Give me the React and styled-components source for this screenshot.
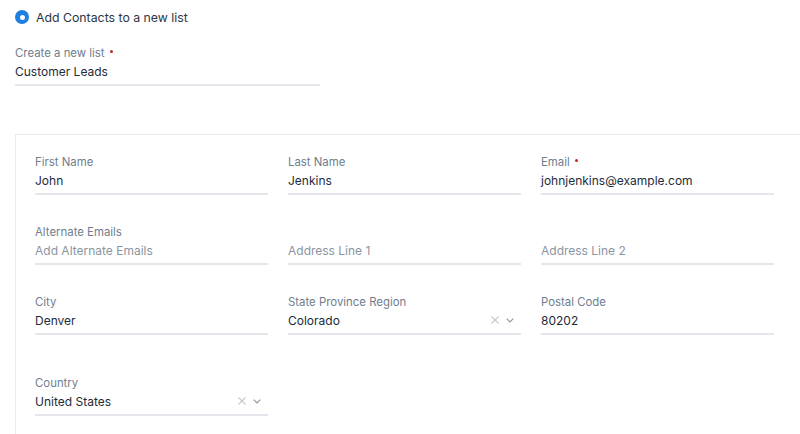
import React from "react";
import styled, { createGlobalStyle } from "styled-components";

const GlobalStyle = createGlobalStyle`
  html, body {
    margin: 0;
    padding: 0;
    background: #ffffff;
    font-family: Inter, "Noto Sans", sans-serif;
    overflow: hidden;
  }
`;

const Page = styled.div`
  padding: 9px 0 0 15px;
  width: 800px;
  height: 434px;
  box-sizing: border-box;
  overflow: hidden;
`;

const RadioRow = styled.label`
  display: flex;
  align-items: center;
  gap: 7px;
  height: 16px;
  font-size: 12.3px;
  color: #2b3646;
`;

const RadioDot = styled.span`
  width: 14px;
  height: 14px;
  border-radius: 50%;
  background: #1b7fe3;
  display: flex;
  align-items: center;
  justify-content: center;
  &::after {
    content: "";
    width: 5px;
    height: 5px;
    border-radius: 50%;
    background: #ffffff;
  }
`;

const ListField = styled.div`
  width: 305px;
  margin-top: 21px;
`;

const Field = styled.div`
  display: flex;
  flex-direction: column;
`;

const Label = styled.div`
  display: flex;
  align-items: center;
  gap: 5px;
  min-height: 14px;
  font-size: 11.4px;
  line-height: 14px;
  color: #6f7d8e;
`;

const Required = styled.span`
  width: 3px;
  height: 3px;
  border-radius: 50%;
  background: #c0282c;
  margin-top: -3px;
`;

const Value = styled.div`
  display: flex;
  align-items: center;
  margin-top: 1px;
  height: 20px;
  font-size: 12px;
  color: ${(p) => (p.$placeholder ? "#8b95a1" : "#1e2b3b")};
  border-bottom: 2px solid #e3e6ea;
  padding-bottom: 3px;
`;

const ValueText = styled.span`
  flex: 1;
`;

const Controls = styled.span`
  display: flex;
  align-items: center;
  gap: 7px;
  padding-right: 7px;
`;

const Panel = styled.div`
  margin-top: 48px;
  border-top: 1px solid #e8eaed;
  border-left: 1px solid #e8eaed;
  padding: 20px 0 20px 19px;
`;

const Grid = styled.div`
  display: grid;
  grid-template-columns: repeat(3, 233px);
  column-gap: 20px;
  row-gap: 30px;
`;

const CountryGrid = styled(Grid)`
  margin-top: 41px;
`;

const ClearIcon = () => (
  <svg width="8" height="8" viewBox="0 0 8 8">
    <path d="M0.5 0.5 L7.5 7.5 M7.5 0.5 L0.5 7.5" stroke="#c3c9cf" strokeWidth="1.1" fill="none" />
  </svg>
);

const ChevronIcon = () => (
  <svg width="8" height="5" viewBox="0 0 8 5">
    <path d="M0.7 0.7 L4 4 L7.3 0.7" stroke="#8b96a3" strokeWidth="1.1" fill="none" />
  </svg>
);

const FormField = ({ label, value, placeholder, required, select }) => (
  <Field>
    <Label>
      {label}
      {required && <Required />}
    </Label>
    <Value $placeholder={!value}>
      <ValueText>{value || placeholder || ""}</ValueText>
      {select && (
        <Controls>
          <ClearIcon />
          <ChevronIcon />
        </Controls>
      )}
    </Value>
  </Field>
);

const fields = [
  { label: "First Name", value: "John" },
  { label: "Last Name", value: "Jenkins" },
  { label: "Email", value: "johnjenkins@example.com", required: true },
  { label: "Alternate Emails", placeholder: "Add Alternate Emails" },
  { label: "", placeholder: "Address Line 1" },
  { label: "", placeholder: "Address Line 2" },
  { label: "City", value: "Denver" },
  { label: "State Province Region", value: "Colorado", select: true },
  { label: "Postal Code", value: "80202" },
];

const App = () => (
  <>
    <GlobalStyle />
    <Page>
      <RadioRow>
        <RadioDot />
        Add Contacts to a new list
      </RadioRow>
      <ListField>
        <FormField label="Create a new list" value="Customer Leads" required />
      </ListField>
      <Panel>
        <Grid>
          {fields.map((f, i) => (
            <FormField key={i} {...f} />
          ))}
        </Grid>
        <CountryGrid>
          <FormField label="Country" value="United States" select />
        </CountryGrid>
      </Panel>
    </Page>
  </>
);

export default App;
